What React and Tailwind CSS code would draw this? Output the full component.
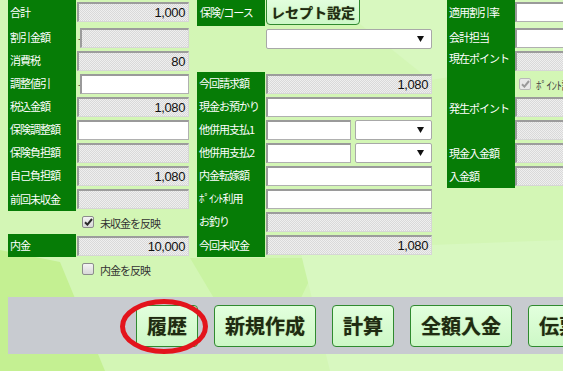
import React from "react";

const LBL =
  "w-[68px] shrink-0 h-full flex items-center pl-[2px] text-white text-[11px] tracking-[-1px] leading-none whitespace-nowrap";
const GREEN = "bg-[#067c06]";
const RO =
  "h-[20px] mt-[2px] border-t-2 border-l-2 border-r border-b border-t-[#9c9c9c] border-l-[#9c9c9c] border-r-[#d6d6d6] border-b-[#d6d6d6] bg-[repeating-conic-gradient(#d9d9d9_0%_25%,#efefef_0%_50%)] bg-[length:2px_2px] flex items-center justify-end pr-[3px] text-[13px] tracking-[-0.4px] font-['Liberation_Sans'] text-[#111] leading-none";
const WH =
  "h-[20px] mt-[2px] bg-white border border-[#b0b0b0] border-t-2 border-l-2 border-t-[#9a9a9a] border-l-[#9a9a9a]";

function Sel({ className }) {
  return (
    <div
      className={
        "h-[20px] mt-[2px] bg-white border border-[#a8a8a8] rounded-[2px] flex items-center justify-end pr-[7px] " +
        className
      }
    >
      <svg width="7" height="6" viewBox="0 0 7 6">
        <polygon points="0,0 7,0 3.5,6" fill="#111" />
      </svg>
    </div>
  );
}

function Check({ checked, disabled }) {
  return (
    <div
      className={
        "w-[12px] h-[12px] rounded-[2px] border flex items-center justify-center " +
        (disabled
          ? "border-[#b8b8b8] bg-[#e8e8e8]"
          : "border-[#8c8c8c] bg-linear-to-b from-[#f4f4f4] to-[#d8d8d8]")
      }
    >
      {checked && (
        <svg width="9" height="8" viewBox="0 0 9 8">
          <path
            d="M1 4.2 L3.4 6.6 L8 1"
            fill="none"
            stroke={disabled ? "#9a9a9a" : "#2a2a2a"}
            strokeWidth="2"
          />
        </svg>
      )}
    </div>
  );
}

function Btn({ children }) {
  return (
    <div className="h-[42px] px-[10px] border border-[#2f8a2f] rounded-[4px] bg-linear-to-b from-[#e2ffdd] to-[#cdf8c6] text-[20px] font-bold text-[#1f2a12] leading-none flex items-center whitespace-nowrap [text-shadow:0_0_1px_#6a8a4a]">
      {children}
    </div>
  );
}

export default function App() {
  return (
    <div className="relative w-[563px] h-[371px] overflow-hidden bg-[#d3f6b5] font-['Noto_Sans_CJK_JP',sans-serif]">
      <svg
        className="absolute inset-0 w-full h-full"
        viewBox="0 0 563 371"
        preserveAspectRatio="none"
      >
        <polygon points="0,250 60,262 105,371 0,371" fill="#c4f092" />
        <polygon points="190,258 320,258 300,300 215,300" fill="#c9f3a2" />
        <polygon points="300,250 563,240 563,371 330,371" fill="#d8f8c0" />
        <polygon points="330,0 563,0 563,60 430,80" fill="#d8f8bf" />
      </svg>

      <div className="relative flex items-start pl-[8px]">
        {/* Left column */}
        <div className="w-[181px] flex flex-col">
          <div className="flex h-[26px]">
            <div className={LBL + " " + GREEN + " pb-[2px]"}>合計</div>
            <div className={RO + " ml-[1px] w-[112px]"}>1,000</div>
          </div>
          <div className="flex h-[23px]">
            <div className={LBL + " " + GREEN}>割引金額</div>
            <div className="flex w-[113px]">
              <span className="w-[5px] text-[9px] leading-none text-[#222] pl-[2px] pt-[8px]">-</span>
              <div className={RO + " flex-1 ml-[-1px]"}></div>
            </div>
          </div>
          <div className="flex h-[23px]">
            <div className={LBL + " " + GREEN}>消費税</div>
            <div className={RO + " ml-[1px] w-[112px]"}>80</div>
          </div>
          <div className="flex h-[23px]">
            <div className={LBL + " " + GREEN}>調整値引</div>
            <div className="flex w-[113px]">
              <span className="w-[5px] text-[9px] leading-none text-[#222] pl-[2px] pt-[8px]">-</span>
              <div className={WH + " flex-1 ml-[-1px]"}></div>
            </div>
          </div>
          <div className="flex h-[23px]">
            <div className={LBL + " " + GREEN}>税込金額</div>
            <div className={RO + " ml-[1px] w-[112px]"}>1,080</div>
          </div>
          <div className="flex h-[23px]">
            <div className={LBL + " " + GREEN}>保険調整額</div>
            <div className={WH + " ml-[1px] w-[112px]"}></div>
          </div>
          <div className="flex h-[23px]">
            <div className={LBL + " " + GREEN}>保険負担額</div>
            <div className={RO + " ml-[1px] w-[112px]"}></div>
          </div>
          <div className="flex h-[23px]">
            <div className={LBL + " " + GREEN}>自己負担額</div>
            <div className={RO + " ml-[1px] w-[112px]"}>1,080</div>
          </div>
          <div className="flex h-[24px]">
            <div className={LBL + " " + GREEN}>前回未収金</div>
            <div className={RO + " ml-[1px] w-[112px]"}></div>
          </div>
          <div className="flex h-[23px] items-start">
            <div className="w-[74px] shrink-0"></div>
            <div className="mt-[5px]">
              <Check checked />
            </div>
            <span className="ml-[6px] mt-[7px] text-[11px] tracking-[-1px] leading-none text-[#333]">
              未収金を反映
            </span>
          </div>
          <div className="flex h-[23px]">
            <div className={LBL + " " + GREEN}>内金</div>
            <div className={RO + " ml-[1px] w-[112px]"}>10,000</div>
          </div>
          <div className="flex h-[23px] items-start">
            <div className="w-[74px] shrink-0"></div>
            <div className="mt-[6px]">
              <Check />
            </div>
            <span className="ml-[6px] mt-[8px] text-[11px] tracking-[-1px] leading-none text-[#333]">
              内金を反映
            </span>
          </div>
        </div>

        {/* Middle column */}
        <div className="w-[235px] ml-[8px] flex flex-col">
          <div className="flex h-[26px]">
            <div className={LBL + " " + GREEN + " pl-[3px] pb-[2px] h-[27px]"}>保険/コース</div>
            <div className="ml-[1px] mt-[-4px] h-[29px] w-[94px] border border-[#2f8a2f] rounded-[4px] bg-linear-to-b from-[#e4ffe0] to-[#cef8c8] flex items-center justify-center pt-[3px] text-[14px] font-bold text-[#1f2a12] leading-none whitespace-nowrap [text-shadow:0_0_1px_#6a8a4a]">
              レセプト設定
            </div>
          </div>
          <div className="flex h-[23px]">
            <div className="w-[68px] shrink-0"></div>
            <Sel className="ml-[1px] w-[166px] mt-[3px]" />
          </div>
          <div className="h-[23px]"></div>
          <div className="flex h-[23px]">
            <div className={LBL + " " + GREEN}>今回請求額</div>
            <div className={RO + " ml-[1px] w-[166px]"}>1,080</div>
          </div>
          <div className="flex h-[23px]">
            <div className={LBL + " " + GREEN}>現金お預かり</div>
            <div className={WH + " ml-[1px] w-[166px]"}></div>
          </div>
          <div className="flex h-[23px]">
            <div className={LBL + " " + GREEN}>他併用支払1</div>
            <div className={WH + " ml-[1px] w-[85px]"}></div>
            <Sel className="ml-[4px] w-[77px]" />
          </div>
          <div className="flex h-[23px]">
            <div className={LBL + " " + GREEN}>他併用支払2</div>
            <div className={WH + " ml-[1px] w-[85px]"}></div>
            <Sel className="ml-[4px] w-[77px]" />
          </div>
          <div className="flex h-[23px]">
            <div className={LBL + " " + GREEN}>内金転嫁額</div>
            <div className={WH + " ml-[1px] w-[166px]"}></div>
          </div>
          <div className="flex h-[23px]">
            <div className={LBL + " " + GREEN}>ﾎﾟｲﾝﾄ利用</div>
            <div className={WH + " ml-[1px] w-[166px]"}></div>
          </div>
          <div className="flex h-[23px]">
            <div className={LBL + " " + GREEN}>お釣り</div>
            <div className={RO + " ml-[1px] w-[166px]"}></div>
          </div>
          <div className="flex h-[24px]">
            <div className={LBL + " " + GREEN}>今回未収金</div>
            <div className={RO + " ml-[1px] w-[166px]"}>1,080</div>
          </div>
        </div>

        {/* Right column */}
        <div className="w-[200px] ml-[15px] flex flex-col shrink-0">
          <div className="flex h-[26px]">
            <div className={LBL + " " + GREEN + " w-[67px] pl-[1px] pb-[2px]"}>適用割引率</div>
            <div className={WH + " w-[120px]"}></div>
          </div>
          <div className="flex h-[23px]">
            <div className={LBL + " " + GREEN + " w-[67px] pl-[1px]"}>会計担当</div>
            <div className={WH + " w-[120px]"}></div>
          </div>
          <div className="flex h-[23px]">
            <div className={LBL + " " + GREEN + " w-[67px] pl-[1px] pb-[4px]"}>現在ポイント</div>
            <div className={RO + " w-[120px]"}></div>
          </div>
          <div className="flex h-[23px] items-start">
            <div className={LBL + " " + GREEN + " w-[67px]"}></div>
            <div className="ml-[4px] mt-[6px]">
              <Check checked disabled />
            </div>
            <span className="ml-[5px] mt-[8px] text-[11px] tracking-[-0.5px] leading-none text-[#444] whitespace-nowrap">
              ﾎﾟｲﾝﾄ計算
            </span>
          </div>
          <div className="flex h-[23px]">
            <div className={LBL + " " + GREEN + " w-[67px] pl-[1px] pt-[3px]"}>発生ポイント</div>
            <div className={RO + " w-[120px]"}></div>
          </div>
          <div className="flex h-[23px]">
            <div className={LBL + " " + GREEN + " w-[67px]"}></div>
            <div className={RO + " w-[120px]"}></div>
          </div>
          <div className="flex h-[23px]">
            <div className={LBL + " " + GREEN + " w-[67px] pl-[1px] pt-[2px]"}>現金入金額</div>
            <div className={RO + " w-[120px]"}></div>
          </div>
          <div className="flex h-[24px]">
            <div className={LBL + " " + GREEN + " w-[67px] pl-[1px]"}>入金額</div>
            <div className={RO + " w-[120px]"}></div>
          </div>
        </div>
      </div>

      {/* Bottom button bar */}
      <div className="relative ml-[8px] mt-[17px] h-[57px] w-[600px] bg-[#c8cbd0] flex items-start pt-[8px] pl-[128px] gap-[16px]">
        <div className="relative">
          <Btn>履歴</Btn>
          <svg
            className="absolute left-[-16px] top-[-6px] w-[88px] h-[55px] pointer-events-none"
            viewBox="0 0 88 55"
          >
            <ellipse
              cx="44"
              cy="27.5"
              rx="41.5"
              ry="25"
              fill="none"
              stroke="#e3141c"
              strokeWidth="5"
            />
          </svg>
        </div>
        <Btn>新規作成</Btn>
        <Btn>計算</Btn>
        <Btn>全額入金</Btn>
        <Btn>伝票発行</Btn>
      </div>
    </div>
  );
}
